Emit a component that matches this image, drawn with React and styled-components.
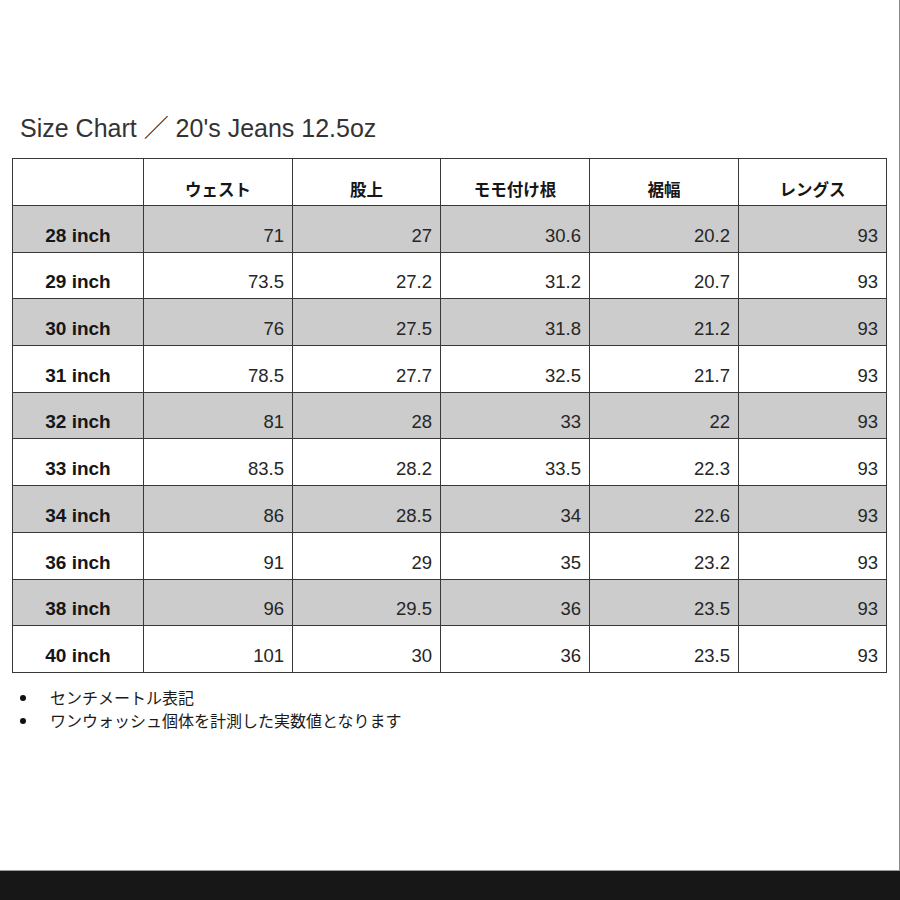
import React from "react";
import styled, { createGlobalStyle } from "styled-components";

const Global = createGlobalStyle`
  html, body { margin: 0; padding: 0; background: #fff; }
  body { font-family: "Liberation Sans", "Noto Sans CJK JP", sans-serif; }
`;

const Page = styled.div`
  width: 900px;
  height: 900px;
  display: flex;
  flex-direction: column;
  box-sizing: border-box;
  overflow: hidden;
`;

const Sheet = styled.div`
  flex: 1;
  display: flex;
  flex-direction: column;
  padding: 113px 0 0 12px;
  border-right: 1.5px solid #8a8a8a;
  box-sizing: border-box;
`;

const Title = styled.h1`
  margin: 0 0 0 8px;
  font-family: "Liberation Sans", "Noto Sans CJK JP", sans-serif;
  font-weight: 400;
  font-size: 25px;
  line-height: 30px;
  color: #333;
`;

const Table = styled.table`
  margin-top: 15px;
  width: 874px;
  border-collapse: collapse;
  table-layout: fixed;
`;

const HeadRow = styled.tr`
  height: 47px;
`;

const Row = styled.tr`
  height: 46.7px;
  background: ${(p) => (p.$shaded ? "#cccccc" : "#ffffff")};
`;

const HeadCell = styled.th`
  border: 1.8px solid #383838;
  vertical-align: bottom;
  padding: 0 0 6px;
  text-align: center;
  font-family: "Noto Sans CJK JP", sans-serif;
  font-weight: 700;
  font-size: 16.5px;
  line-height: 20px;
  color: #161616;
`;

const LabelCell = styled.td`
  border: 1.8px solid #383838;
  vertical-align: bottom;
  padding: 0 0 5px;
  text-align: center;
  font-weight: 700;
  font-size: 19px;
  line-height: 22px;
  color: #161616;
`;

const NumCell = styled.td`
  border: 1.8px solid #383838;
  vertical-align: bottom;
  padding: 0 8px 5px 0;
  text-align: right;
  font-size: 18.5px;
  line-height: 22px;
  color: #262626;
`;

const Notes = styled.ul`
  margin: 13px 0 0;
  padding: 0;
  list-style: none;
`;

const Note = styled.li`
  position: relative;
  padding-left: 38px;
  font-family: "Noto Sans CJK JP", sans-serif;
  font-size: 16px;
  line-height: 23px;
  color: #1a1a1a;
  &::before {
    content: "";
    position: absolute;
    left: 8px;
    top: 9px;
    width: 6px;
    height: 6px;
    border-radius: 50%;
    background: #111;
  }
`;

const Bar = styled.div`
  height: 29px;
  flex: none;
  background: #171717;
  border-top: 1.5px solid #9a9a9a;
`;

const widths = [131, 149, 148, 149, 149, 148];
const headers = ["", "ウェスト", "股上", "モモ付け根", "裾幅", "レングス"];
const rows = [
  ["28 inch", "71", "27", "30.6", "20.2", "93"],
  ["29 inch", "73.5", "27.2", "31.2", "20.7", "93"],
  ["30 inch", "76", "27.5", "31.8", "21.2", "93"],
  ["31 inch", "78.5", "27.7", "32.5", "21.7", "93"],
  ["32 inch", "81", "28", "33", "22", "93"],
  ["33 inch", "83.5", "28.2", "33.5", "22.3", "93"],
  ["34 inch", "86", "28.5", "34", "22.6", "93"],
  ["36 inch", "91", "29", "35", "23.2", "93"],
  ["38 inch", "96", "29.5", "36", "23.5", "93"],
  ["40 inch", "101", "30", "36", "23.5", "93"],
];

export default function App() {
  return (
    <Page>
      <Global />
      <Sheet>
        <Title>Size Chart ／ 20's Jeans 12.5oz</Title>
        <Table>
          <colgroup>
            {widths.map((w, i) => (
              <col key={i} style={{ width: w }} />
            ))}
          </colgroup>
          <thead>
            <HeadRow>
              {headers.map((h, i) => (
                <HeadCell key={i}>{h}</HeadCell>
              ))}
            </HeadRow>
          </thead>
          <tbody>
            {rows.map((r, i) => (
              <Row key={r[0]} $shaded={i % 2 === 0}>
                <LabelCell>{r[0]}</LabelCell>
                {r.slice(1).map((v, j) => (
                  <NumCell key={j}>{v}</NumCell>
                ))}
              </Row>
            ))}
          </tbody>
        </Table>
        <Notes>
          <Note>センチメートル表記</Note>
          <Note>ワンウォッシュ個体を計測した実数値となります</Note>
        </Notes>
      </Sheet>
      <Bar />
    </Page>
  );
}
